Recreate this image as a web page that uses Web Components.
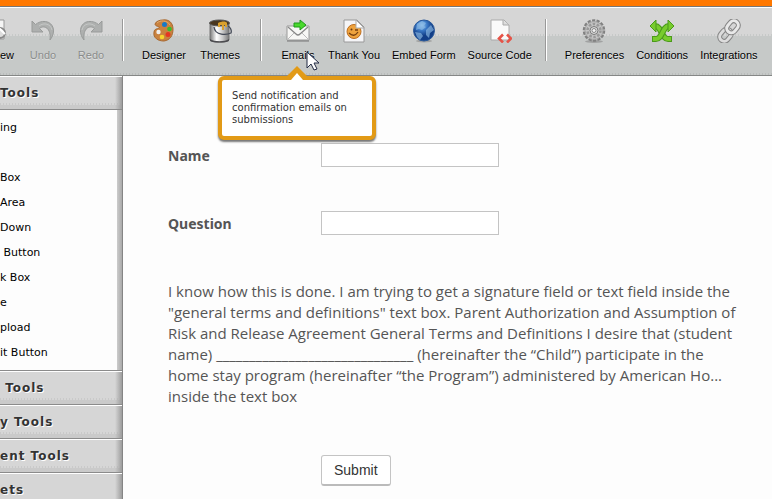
<!DOCTYPE html>
<html lang="en">
<head>
<meta charset="utf-8">
<title>Form Builder</title>
<style>
  body {
    margin: 0;
    background: #fdfdfd;
    font-family: "Liberation Sans", Arial, sans-serif;
    color: #000;
    overflow: hidden;
  }
</style>
</head>
<body>
<form-builder></form-builder>

<script>
// icons for the toolbar, all on a 24x24 grid
const icons = {
  preview: `<path d="M0 1h9v19H0z" fill="#f5f5f5" stroke="#999"/><circle cx="5" cy="14" r="5" fill="#ddd" stroke="#888" stroke-width="2"/><path d="M4 9l6 6" stroke="#fff" stroke-width="2"/>`,
  undo: `<path d="M1 2v11h11L8.500 9.500C13 5.500 20.500 9 19 21C25.500 13 22.500 3.500 14.500 2.500C10.500 2 7 3.500 4.500 5.500z" fill="#aeb0af" stroke="#999b9a"/><path d="M8 7c5-4 12-2 13 4" fill="none" stroke="#c5c7c6"/>`,
  redo: `<path d="M23 2v11H12l3.500-3.500C11 5.500 3.500 9 5 21C-1.500 13 1.500 3.500 9.500 2.500C13.500 2 17 3.500 19.500 5.500z" fill="#aeb0af" stroke="#999b9a"/><path d="M16 7C11 3 4 5 3 11" fill="none" stroke="#c5c7c6"/>`,
  designer: `<path d="M11 1C17 0 21 4 21 10C21 17 18 21 12 22C6 22 1 19 2 13C2 10 5 10 7 9C9 7 3 8 3 5C4 2 8 1 11 1z" fill="#c9823f" stroke="#a8682f"/><path d="M5 4c3-3 10-3 13 2" fill="none" stroke="#e4aa6b"/><circle cx="12.500" cy="5.500" r="2.500" fill="#1679c8"/><circle cx="17.500" cy="10" r="2.300" fill="#36bd2e"/><circle cx="16" cy="15.500" r="2.500" fill="#e33822"/><circle cx="10" cy="18" r="2.300" fill="#f7d42c"/><circle cx="6.500" cy="13" r="2.200" fill="#f1efec"/>`,
  themes: `<defs><linearGradient id="can"><stop stop-color="#777"/><stop offset=".35" stop-color="#fff"/><stop offset=".65" stop-color="#ccc"/><stop offset="1" stop-color="#777"/></linearGradient></defs><path d="M2 4v17c3 3 16 3 19 0V4z" fill="url(#can)" stroke="#777"/><ellipse cx="11.500" cy="4" rx="10" ry="3" fill="#493720" stroke="#555"/><path d="M10 4c4-2 8-2 9 0v4h-2V6h-1v5h-2V6h-2v2h-2z" fill="#d9a02d"/><path d="M6 8c1 9 13 8 17 6c1-3-1-6-3-7" fill="none" stroke="#444a57" stroke-width="1.300"/><path d="M2 20c4 3 15 3 19 0v2c-4 2-15 2-19 0z" fill="#4c4c50"/>`,
  emails: `<path d="M1 7h22v14H1z" fill="#f7f7f5" stroke="#999"/><path d="M1 21l8-8M23 21l-8-8" stroke="#bbb"/><path d="M2 8l8 7q2 2 4 0l8-7" fill="none" stroke="#888" stroke-width="1.300"/><path d="M1 22h22" stroke="#777"/><path d="M8 4h6V1l6 5l-6 5V8H8z" fill="#49d92c" stroke="#1e991a"/>`,
  thanks: `<path d="M2 1h13l7 7v15H2z" fill="#f5f5f7" stroke="#999"/><circle cx="12" cy="12.500" r="7" fill="#efa33d" stroke="#bd6e20"/><path d="M14 1v8h8z" fill="#fff" stroke="#aaa"/><circle cx="9.500" cy="10.500" r="1" fill="#68360f"/><path d="M13 11h3M7 14q5 5 9-1" fill="none" stroke="#78400f" stroke-width="1.300"/>`,
  embed: `<defs><radialGradient id="sea" cx=".4" cy=".25"><stop stop-color="#93c4ee"/><stop offset=".5" stop-color="#3b79c6"/><stop offset="1" stop-color="#133f88"/></radialGradient></defs><ellipse cx="12" cy="22" rx="8" ry="1.500" fill="#888" opacity=".6"/><circle cx="12" cy="11.500" r="10.500" fill="url(#sea)" stroke="#275799"/><path d="M5 5l5-3l4 2l-2 3l2 1l-4 3l-3-1l-3 1zM14 11l5-5l3 5l-4 3l-1 5l-3-3zM3 13l6 1l2 3l-3 4l-3-3z" fill="#8dbbe5" opacity=".65"/>`,
  source: `<path d="M3 1h13l5 5v15H3z" fill="#fafafa" stroke="#aaa"/><path d="M15 1v5h6" fill="#ddd" stroke="#aaa"/><path d="M15 15.500l-4 4l4 4M19 15.500l4 4l-4 4" fill="none" stroke="#e65347" stroke-width="2.600"/>`,
  preferences: `<ellipse cx="12" cy="22.500" rx="9" ry="1.500" fill="#888" opacity=".6"/><circle cx="12" cy="11.500" r="9.500" fill="none" stroke="#808080" stroke-width="3.500" stroke-dasharray="3 1.264"/><circle cx="12" cy="11.500" r="9" fill="#c4c4c4" stroke="#a5a5a5"/><circle cx="12" cy="11.500" r="6.500" fill="none" stroke="#999" stroke-width="2.500" stroke-dasharray="2.500 1.580"/><circle cx="12" cy="11.500" r="4" fill="#ddd" stroke="#777"/><circle cx="12" cy="11.500" r="2" fill="#f2f2f2" stroke="#888"/>`,
  conditions: `<g fill="none"><path d="M22 20h-4C11 20 12 7 5 7" stroke="#4b9a1b" stroke-width="6"/><path d="M21 20h-3C11 20 12 7 5 7" stroke="#78cc2d" stroke-width="4"/></g><path d="M6 1v12L0 7z" fill="#78cc2d" stroke="#4b9a1b"/><g fill="none"><path d="M2 20h4C13 20 12 7 19 7" stroke="#4b9a1b" stroke-width="6"/><path d="M3 20h3C13 20 12 7 19 7" stroke="#78cc2d" stroke-width="4"/></g><path d="M18 1v12l6-6z" fill="#78cc2d" stroke="#4b9a1b"/>`,
  integrations: `<g fill="none" transform="rotate(-50 12 12)"><rect x="0" y="7.500" width="13" height="9" rx="4.500" stroke="#858585" stroke-width="5"/><rect x="0" y="7.500" width="13" height="9" rx="4.500" stroke="#dcdcdc" stroke-width="3"/><rect x="11" y="7.500" width="13" height="9" rx="4.500" stroke="#858585" stroke-width="5"/><rect x="11" y="7.500" width="13" height="9" rx="4.500" stroke="#e8e8e8" stroke-width="3"/></g>`
};

class ToolButton extends HTMLElement {
  constructor() {
    super();
    const shadowRoot = this.attachShadow({ mode: 'open' });
    shadowRoot.innerHTML = `
      <style>
        :host { display: block; position: relative; }
        button {
          display: flex;
          flex-direction: column;
          align-items: center;
          gap: 4px;
          min-width: var(--tool-width, 48px);
          padding: 0 var(--tool-padding, 6px);
          border: 0;
          background: none;
          font: 11px/16px "Liberation Sans", Arial, sans-serif;
          color: #000;
          white-space: nowrap;
          text-shadow: 0 1px 0 #e3e3e3;
        }
        button:disabled { color: #8a8c8b; }
        svg { display: block; flex: none; width: 24px; height: 24px; }
        :host([clipped]) button { width: 19px; min-width: 0; padding: 0 5px 0 0; }
      </style>
      <button type="button" ${this.hasAttribute('disabled') ? 'disabled' : ''}>
        <svg viewBox="0 0 24 24" aria-hidden="true">${icons[this.getAttribute('icon')]}</svg>
        <span><slot></slot></span>
      </button>
      <slot name="tip"></slot>
    `;
  }
}

class ToolTip extends HTMLElement {
  constructor() {
    super();
    const shadowRoot = this.attachShadow({ mode: 'open' });
    shadowRoot.innerHTML = `
      <style>
        :host {
          display: block;
          position: absolute;
          z-index: 5;
          top: 57px;
          left: 50%;
          width: 158px;
          margin-left: -80px;
          box-sizing: border-box;
          padding: 10px 10px 10px;
          border: 4px solid #e29a16;
          border-radius: 6px;
          background: #fff;
          box-shadow: 0 2px 2px #777;
          font: 10px/12px "DejaVu Sans", Verdana, sans-serif;
          color: #333;
        }
        svg { position: absolute; top: -14px; left: 65px; width: 20px; height: 16px; }
      </style>
      <svg viewBox="0 0 20 16" aria-hidden="true"><path d="M0 10L10 0l10 10v4H0z" fill="#e29a16"/><path d="M4 14l6-7l6 7v2H4z" fill="#fff"/></svg>
      <slot></slot>
    `;
  }
}

class ToolGroup extends HTMLElement {
  constructor() {
    super();
    const shadowRoot = this.attachShadow({ mode: 'open' });
    shadowRoot.innerHTML = `
      <style>
        :host { display: flex; flex: none; }
        :host(:not(:first-child))::before {
          content: "";
          width: 1px;
          height: 42px;
          margin: 0 12px 0 7px;
          border-left: 1px solid #999;
          background: #fff;
        }
      </style>
      <slot></slot>
    `;
  }
}

class ToolBar extends HTMLElement {
  constructor() {
    super();
    const shadowRoot = this.attachShadow({ mode: 'open' });
    shadowRoot.innerHTML = `
      <style>
        :host {
          display: block;
          border-top: 6px solid #ff7800;
        }
        nav {
          display: flex;
          height: 70px;
          box-sizing: border-box;
          padding-top: 12px;
          border-top: 1px solid #777;
          border-bottom: 1px solid #858786;
          box-shadow: inset 0 1px #fff;
          background:
            repeating-linear-gradient(90deg, #c6c9c8 0 1px, transparent 1px 3px) 0 27px / 100% 2px no-repeat,
            repeating-linear-gradient(90deg, #b9bcbb 0 1px, transparent 1px 3px) 0 66px / 100% 2px no-repeat,
            linear-gradient(#d6d6d6 29px, #c6c9c8 29px);
        }
        ::slotted(.design) { --tool-width: 56px; margin-right: 5px; }
      </style>
      <nav><slot></slot></nav>
    `;
  }
}

class ToolSection extends HTMLElement {
  constructor() {
    super();
    const shadowRoot = this.attachShadow({ mode: 'open' });
    shadowRoot.innerHTML = `
      <style>
        :host { display: block; font-family: "DejaVu Sans", Verdana, sans-serif; }
        h2 {
          height: 34px;
          box-sizing: border-box;
          margin: 0;
          border-top: 1px solid #fff;
          border-bottom: 1px solid #8b8b8b;
          background:
            linear-gradient(90deg, transparent, #9d9d9d) right / 7px 100% no-repeat,
            repeating-linear-gradient(90deg, #c9c9c9 0 1px, transparent 1px 3px) 0 26px / 100% 2px no-repeat,
            linear-gradient(#d6d6d6 28px, #cacaca 28px);
          font-size: 12px;
          line-height: 32px;
          letter-spacing: 1px;
          color: #333;
          text-shadow: 1px 1px #fff;
          white-space: pre;
        }
        ul {
          margin: 0;
          padding: 5px 0;
          list-style: none;
          border-bottom: 1px solid #8b8b8b;
          font-size: 11px;
          line-height: 25px;
          white-space: pre;
        }
        li { height: 25px; }
      </style>
      <h2><slot></slot></h2>
    `;
    const items = this.getAttribute('items');
    if (items) {
      const ul = document.createElement('ul');
      items.split(',').forEach(item => {
        const li = document.createElement('li');
        li.textContent = item;
        ul.append(li);
      });
      shadowRoot.append(ul);
    }
  }
}

class SideBar extends HTMLElement {
  constructor() {
    super();
    const shadowRoot = this.attachShadow({ mode: 'open' });
    shadowRoot.innerHTML = `
      <style>
        :host {
          display: block;
          flex: none;
          width: 123px;
          box-sizing: border-box;
          border-right: 1px solid #858585;
          background: linear-gradient(90deg, #ccc, #aaa) right / 5px 100% no-repeat;
        }
      </style>
      <slot></slot>
    `;
  }
}

class TextField extends HTMLElement {
  constructor() {
    super();
    const shadowRoot = this.attachShadow({ mode: 'open' });
    shadowRoot.innerHTML = `
      <style>
        :host { display: grid; grid-template-columns: 153px 1fr; align-items: center; }
        label { font: bold 14px/21px "Noto Sans", sans-serif; }
        input {
          width: 178px;
          height: 24px;
          box-sizing: border-box;
          border: 1px solid #c4c4c4;
          background: #fff;
        }
      </style>
      <label for="field"><slot></slot></label>
      <input id="field" type="text">
    `;
  }
}

class FormCanvas extends HTMLElement {
  constructor() {
    super();
    const shadowRoot = this.attachShadow({ mode: 'open' });
    shadowRoot.innerHTML = `
      <style>
        :host {
          display: block;
          flex: 1;
          padding: 67px 30px 0 45px;
          font: 15px/21px "Open Sans", "Noto Sans", sans-serif;
          color: #555;
        }
        form { display: flex; flex-direction: column; gap: 44px; }
        p { margin: 2px 0 4px; }
        button {
          align-self: flex-start;
          margin-left: 153px;
          padding: 0 12px;
          height: 31px;
          border: 1px solid #c4c4c4;
          border-bottom: 2px solid #bbb;
          border-radius: 3px;
          background: #fff;
          font: 14px "Liberation Sans", Arial, sans-serif;
          color: #333;
        }
      </style>
      <form>
        <text-field>Name</text-field>
        <text-field>Question</text-field>
        <p>I know how this is done. I am trying to get a signature field or text field inside the "general terms and definitions" text box. Parent Authorization and Assumption of Risk and Release Agreement General Terms and Definitions I desire that (student name) ______________________________ (hereinafter the “Child”) participate in the home stay program (hereinafter “the Program”) administered by American Ho... inside the text box</p>
        <button type="button">Submit</button>
      </form>
    `;
  }
}

class MousePointer extends HTMLElement {
  constructor() {
    super();
    const shadowRoot = this.attachShadow({ mode: 'open' });
    shadowRoot.innerHTML = `
      <style>
        :host { display: block; position: absolute; z-index: 9; left: 306px; top: 51px; }
        svg { display: block; }
      </style>
      <svg width="13" height="21" viewBox="0 0 13 21" aria-hidden="true"><path d="M1 1v16l4-4l3 6l3-1l-3-6h5z" fill="#fff" stroke="#222a44"/></svg>
    `;
  }
}

class FormBuilder extends HTMLElement {
  constructor() {
    super();
    const shadowRoot = this.attachShadow({ mode: 'open' });
    shadowRoot.innerHTML = `
      <style>
        :host { display: flex; flex-direction: column; height: 100vh; overflow: hidden; position: relative; }
        tool-bar { flex: none; }
        main { display: flex; flex: 1; min-height: 0; }
      </style>
      <tool-bar>
        <tool-group class="history">
          <tool-button icon="preview" clipped>ew</tool-button>
          <tool-button icon="undo" disabled>Undo</tool-button>
          <tool-button icon="redo" disabled>Redo</tool-button>
        </tool-group>
        <tool-group class="design">
          <tool-button icon="designer">Designer</tool-button>
          <tool-button icon="themes">Themes</tool-button>
        </tool-group>
        <tool-group class="publish">
          <tool-button icon="emails">Emails<tool-tip slot="tip">Send notification and confirmation emails on submissions</tool-tip></tool-button>
          <tool-button icon="thanks">Thank You</tool-button>
          <tool-button icon="embed">Embed Form</tool-button>
          <tool-button icon="source">Source Code</tool-button>
        </tool-group>
        <tool-group class="settings">
          <tool-button icon="preferences">Preferences</tool-button>
          <tool-button icon="conditions">Conditions</tool-button>
          <tool-button icon="integrations">Integrations</tool-button>
        </tool-group>
      </tool-bar>
      <main>
        <side-bar>
          <tool-section items="ing,,Box,Area,Down, Button,k Box,e,pload,it Button">Tools</tool-section>
          <tool-section> Tools</tool-section>
          <tool-section>y Tools</tool-section>
          <tool-section>ent Tools</tool-section>
          <tool-section>ets</tool-section>
        </side-bar>
        <form-canvas></form-canvas>
      </main>
      <mouse-pointer></mouse-pointer>
    `;
  }
}

customElements.define('tool-tip', ToolTip);
customElements.define('tool-button', ToolButton);
customElements.define('tool-group', ToolGroup);
customElements.define('tool-bar', ToolBar);
customElements.define('tool-section', ToolSection);
customElements.define('side-bar', SideBar);
customElements.define('text-field', TextField);
customElements.define('form-canvas', FormCanvas);
customElements.define('mouse-pointer', MousePointer);
customElements.define('form-builder', FormBuilder);
</script>
</body>
</html>
